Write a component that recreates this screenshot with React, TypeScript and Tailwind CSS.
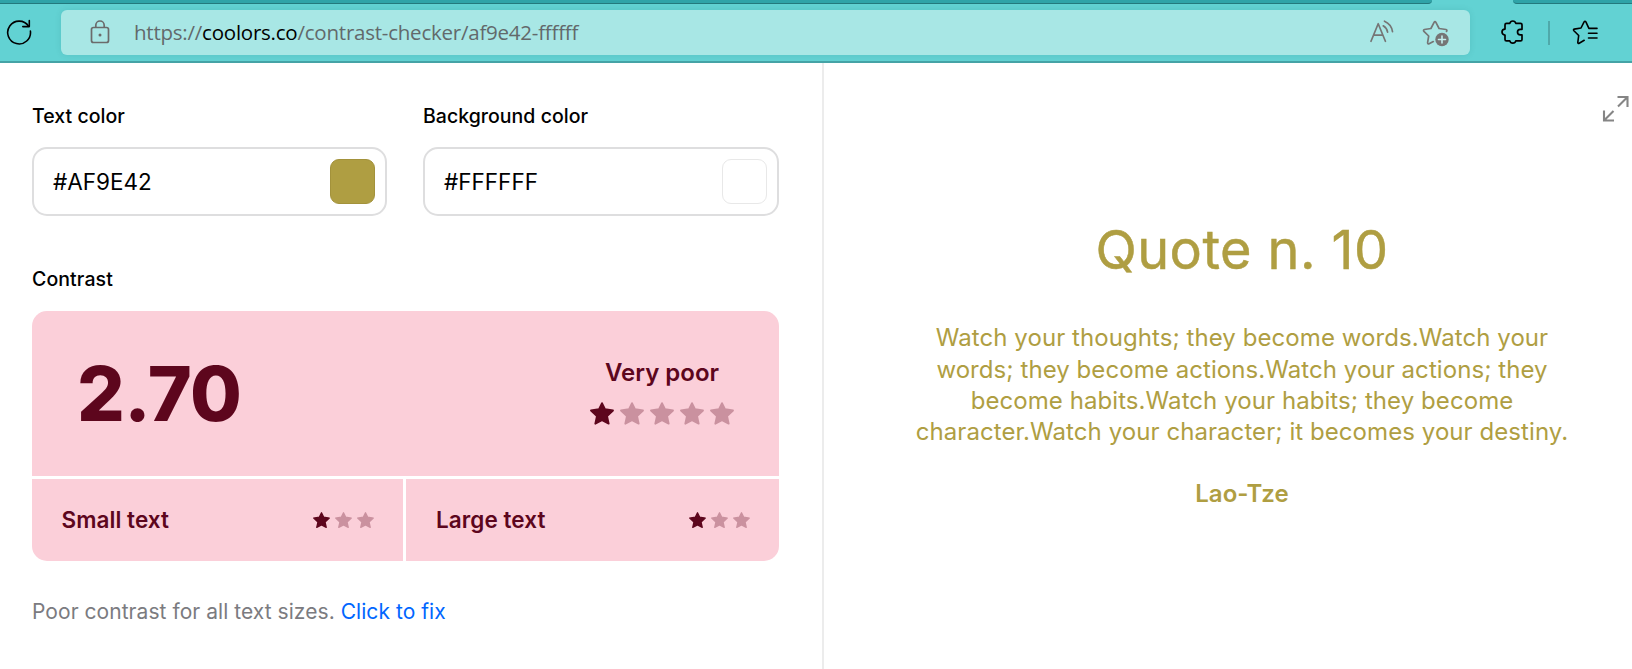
import React from "react";

const STAR =
  "M12 1.1L15 7.2L23 8.500L17.100 14.200L18.700 21.700L12 18.300L5.300 21.700L6.900 14.200L1 8.500L9 7.200Z";

function Stars({ total, className, gap }: { total: number; className: string; gap: string }) {
  return (
    <div className={`flex ${gap}`}>
      {Array.from({ length: total }, (_, i) => (
        <svg key={i} viewBox="0 0 24 24" className={`${className} ${i === 0 ? "opacity-100" : "opacity-30"}`}>
          <path d={STAR} fill="#5d061d" stroke="#5d061d" strokeWidth="1.8" strokeLinejoin="round" />
        </svg>
      ))}
    </div>
  );
}

function BrowserBar() {
  return (
    <header className="h-[63px] shrink-0 bg-[#62d2d3] border-b-2 border-[#45a3a6] flex flex-col">
      <div className="flex justify-between h-1">
        <div className="w-[1432px] h-1 bg-[#2fa3a8] border-b border-[#23797d] rounded-br-[4px]" />
        <div className="w-[119px] h-1 bg-[#2fa3a8] border-b border-[#23797d] rounded-bl-[4px]" />
      </div>
      <div className="flex items-center h-[57px]">
        <svg className="shrink-0 ml-[6px] mb-0.5 size-[26px]" viewBox="0 0 26 26" fill="none" stroke="#000" strokeWidth="1.6" strokeLinecap="round" strokeLinejoin="round">
          <path d="M24.400 12A11.400 11.400 0 1 1 22.600 7.200" />
          <path d="M23.300 1.500V7.600H16.800" />
        </svg>
        <div className="shrink-0 ml-[29px] w-[1409px] h-[45px] rounded-[6px] bg-[#a8e7e5] shadow-[0_0_6px_rgba(0,90,90,0.12)] flex items-center">
          <svg className="ml-[29px] mb-px w-5 h-6" viewBox="0 0 20 24" fill="none" stroke="#6b6b6b" strokeWidth="1.7">
            <rect x="1.5" y="7.500" width="17" height="15" rx="2" />
            <path d="M5.800 7.500V5.200a4.200 4.200 0 0 1 8.400 0V7.500" />
            <circle cx="10" cy="15" r="1.500" fill="#6b6b6b" stroke="none" />
          </svg>
          <div className="ml-[24px] mb-0.5 font-['Open_Sans','Noto_Sans',sans-serif] text-[20.5px] tracking-[-0.23px] leading-[28px] whitespace-nowrap text-[#62696b]">
            https://<span className="text-black">coolors.co</span>/contrast-checker/af9e42-ffffff
          </div>
          <svg className="ml-auto mb-0.5 w-[26px] h-[26px]" viewBox="0 0 26 26" fill="none" stroke="#757575" strokeWidth="1.7" strokeLinecap="round" strokeLinejoin="round">
            <path d="M2 22.300L9.200 4.700L16.400 22.300M4.500 16.200H13.900" />
            <path d="M14.200 6.800A9 9 0 0 1 18.600 13.200M15.500 2.200A13.500 13.500 0 0 1 23.500 12.600" />
          </svg>
          <svg className="ml-[27px] mr-5 size-7" viewBox="0 0 28 28" fill="none" stroke="#757575" strokeWidth="1.7" strokeLinecap="round" strokeLinejoin="round">
            <path d="M24.500 12.400C25.200 11.500 25 10.700 24 10.500L17.100 9.500L13.900 3.300C13.500 2.500 12.500 2.500 12.100 3.300L8.900 9.500L2.400 10.500C1.500 10.700 1.200 11.600 1.900 12.300L6.700 17L5.600 23.700C5.500 24.700 6.300 25.200 7.100 24.800L11.300 22.600" />
            <circle cx="20" cy="20.500" r="6.700" fill="#757575" stroke="none" />
            <path d="M20 17v7M16.500 20.500h7" stroke="#c4efee" strokeWidth="1.6" />
          </svg>
        </div>
        <svg className="shrink-0 ml-[29px] mb-0.5 size-[26px]" viewBox="0 0 26 26" fill="none" stroke="#000" strokeWidth="1.7" strokeLinejoin="round">
          <path d="M7.500 4.300H10.800A3.100 3.100 0 0 1 16.800 4.300H21.500Q23 4.300 23 5.800V10.300H21.300A2.800 2.800 0 0 0 21.300 15.900H23V20.400Q23 21.900 21.500 21.900H16.800A3.100 3.100 0 0 1 10.800 21.900H7.500Q6 21.900 6 20.400V16.100A3 3 0 0 1 6 10.100V5.800Q6 4.300 7.500 4.300Z" />
        </svg>
        <div className="shrink-0 ml-[23px] w-[2px] h-6 bg-[#4fa9aa]" />
        <svg className="shrink-0 ml-[22px] mb-0.5 w-[28px] h-[26px]" viewBox="0 0 28 26" fill="none" stroke="#000" strokeWidth="1.6" strokeLinecap="round" strokeLinejoin="round">
          <path d="M25 9.400H16.900L13.900 2.900Q13 1.500 12.100 2.900L9 9L2.300 10.100Q0.900 10.600 1.900 11.700L6.700 16.500L5.800 23.400Q5.900 25 7.200 24.200L12.200 21.300" />
          <path d="M16.500 14.200H25M16.500 19H25" />
        </svg>
      </div>
    </header>
  );
}

function ColorField({ label, value, swatch }: { label: string; value: string; swatch: string }) {
  return (
    <div>
      <div className="text-[19.5px] leading-6 font-medium text-black tracking-[0.03px]"><span>{label}</span></div>
      <div className="mt-[19px] h-[69px] rounded-[15px] border-2 border-[#dededf] flex items-center justify-between pl-[19px] pr-[10px]">
        <span className="text-[22.5px] leading-[30px] text-black">{value}</span>
        <div className={`size-[45px] rounded-[9px] border ${swatch}`} />
      </div>
    </div>
  );
}

export default function App() {
  return (
    <div className="w-[1632px] h-[669px] overflow-hidden bg-white flex flex-col font-[Inter,sans-serif]">
      <BrowserBar />
      <div className="flex flex-1">
        <main className="w-[824px] border-r-2 border-[#ececec] pl-8 pr-[43px] pt-[41px]">
          <div className="grid grid-cols-[355px_356px] gap-9">
            <ColorField label="Text color" value="#AF9E42" swatch="bg-[#af9e42] border-[#a3923b]" />
            <ColorField label="Background color" value="#FFFFFF" swatch="bg-white border-[#e8e8e8]" />
          </div>
          <div className="mt-[51px] text-[19.5px] leading-6 font-medium text-black tracking-[0.1px]"><span>Contrast</span></div>
          <div className="mt-5 rounded-[15px] overflow-hidden flex flex-col gap-[3px] text-[#5d061d]">
            <div className="h-[165px] bg-[#fbcfd9] flex items-center justify-between pl-[45px] pr-[45px]">
              <span className="text-[75px] leading-[90px] font-[800] tracking-[-0.6px]">2.70</span>
              <div className="flex flex-col items-center pb-1">
                <span className="text-[24px] leading-[30px] font-semibold">Very poor</span>
                <Stars total={5} gap="mt-[14px] -mb-px gap-1.5" className="size-6" />
              </div>
            </div>
            <div className="flex gap-[3px] h-[82px]">
              <div className="w-[371px] bg-[#fbcfd9] flex items-center justify-between pl-[29.5px] pr-[29.5px]">
                <span className="text-[22.5px] leading-[30px] font-semibold tracking-[0.06px]">Small text</span>
                <Stars total={3} gap="mt-px gap-[5px]" className="size-[17px]" />
              </div>
              <div className="flex-1 bg-[#fbcfd9] flex items-center justify-between pl-[30px] pr-[29px]">
                <span className="text-[22.5px] leading-[30px] font-semibold tracking-[0.06px]">Large text</span>
                <Stars total={3} gap="mt-px gap-[5px]" className="size-[17px]" />
              </div>
            </div>
          </div>
          <p className="mt-[36px] text-[21px] leading-[30px] tracking-[0.05px] text-[#7b7b80]">
            <span>Poor contrast for all text sizes. </span><span className="text-[#0066ff]">Click to fix</span>
          </p>
        </main>
        <section className="relative flex-1 pl-[28px] pt-[155px] flex flex-col items-center text-center text-[#af9e42]">
          <svg className="absolute left-[778px] top-[32px] size-[28px]" viewBox="0 0 28 28" fill="none" stroke="#858585" strokeWidth="2.1">
            <path d="M15.500 2H25.500V12M25.500 2L16 11.500M2 15.500V25.500H12M2 25.500L11.500 16" />
          </svg>
          <h1 className="text-[54px] leading-[64px] whitespace-nowrap font-normal tracking-[0.45px] [-webkit-text-stroke:0.5px_#af9e42]"><span>Quote n. 10</span></h1>
          <div className="mt-[40px] text-[24px] leading-[31.200px] tracking-[0.07px] whitespace-nowrap">
            <div className="h-[31.7px]"><span>Watch your thoughts; they become words.Watch your</span></div>
            <div><span>words; they become actions.Watch your actions; they</span></div>
            <div><span>become habits.Watch your habits; they become</span></div>
            <div><span>character.Watch your character; it becomes your destiny.</span></div>
          </div>
          <div className="mt-[30.5px] text-[24px] leading-[31px] font-semibold"><span>Lao-Tze</span></div>
        </section>
      </div>
    </div>
  );
}
